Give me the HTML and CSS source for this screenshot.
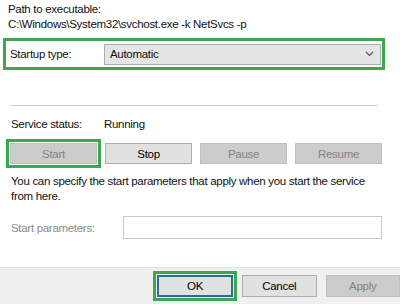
FILE: index.html
```html
<!DOCTYPE html>
<html>
<head>
<meta charset="utf-8">
<link rel="stylesheet" href="styles.css">
</head>
<body>
<div class="dialog">
  <div class="main">
    <div class="label top">Path to executable:</div>
    <div class="label">C:\Windows\System32\svchost.exe -k NetSvcs -p</div>
    <div class="hl startup">
      <span class="field-label">Startup type:</span>
      <div class="select">
        <span>Automatic</span>
        <svg class="chev" width="9" height="6" viewBox="0 0 9 6"><path d="M1 1 L4.5 4.5 L8 1" fill="none" stroke="#555" stroke-width="1.2"/></svg>
      </div>
    </div>
    <div class="sep"></div>
    <div class="status-row">
      <span class="field-label">Service status:</span>
      <span>Running</span>
    </div>
    <div class="btn-row">
      <div class="hl hl-btn"><button class="btn disabled">Start</button></div>
      <button class="btn">Stop</button>
      <button class="btn disabled">Pause</button>
      <button class="btn disabled">Resume</button>
    </div>
    <p class="desc">You can specify the start parameters that apply when you start the service from here.</p>
    <div class="params-row">
      <span class="field-label gray">Start parameters:</span>
      <div class="input"></div>
    </div>
  </div>
  <div class="footer">
    <div class="hl hl-btn"><button class="btn fbtn default">OK</button></div>
    <button class="btn fbtn">Cancel</button>
    <button class="btn fbtn disabled">Apply</button>
  </div>
</div>
</body>
</html>
```

FILE: styles.css
```css
* { box-sizing: border-box; }
html, body { margin: 0; padding: 0; background: #fff; }
body {
  font-family: "Liberation Sans", Arial, sans-serif;
  font-size: 11.5px;
  letter-spacing: -0.3px;
  color: #111;
}
.dialog {
  width: 400px;
  height: 304px;
  overflow: hidden;
  display: flex;
  flex-direction: column;
}
.main {
  height: 267px;
  padding: 2px 0 0 8px;
}
.label { line-height: 14px; }
.label + .label { margin-top: 1px; }
.hl { border: 3px solid #3ea652; }
.startup {
  margin: 7px 0 0 -5px;
  width: 382px;
  height: 32px;
  padding: 0 1px 0 4px;
  display: flex;
  align-items: center;
}
.field-label { width: 94px; flex: none; }
.select {
  flex: 1;
  height: 21px;
  background: #e5e5e5;
  border: 1px solid #adadad;
  display: flex;
  align-items: center;
  justify-content: space-between;
  padding: 0 6px 0 5px;
}
.chev { display: block; }
.sep {
  margin: 35px 0 0 2px;
  width: 368px;
  height: 1px;
  background: #cdcdcd;
}
.status-row {
  margin-top: 11px;
  padding-left: 3px;
  display: flex;
  line-height: 14px;
}
.status-row .field-label { width: 93px; }
.btn-row {
  margin: 8px 0 0 -2px;
  display: flex;
  align-items: center;
  gap: 8px;
}
.hl-btn { padding: 1px; }
.btn-row .hl-btn { margin-right: -4px; }
.btn {
  width: 87px;
  height: 21px;
  font: inherit;
  letter-spacing: inherit;
  background: #e1e1e1;
  border: 1px solid #adadad;
  color: #000;
  padding: 0;
  display: block;
}
.btn.disabled {
  background: #cccccc;
  border-color: #bfbfbf;
  color: #838383;
}
.desc {
  margin: 6px 0 0 3px;
  width: 372px;
  line-height: 15px;
}
.params-row {
  margin-top: 12px;
  padding-left: 3px;
  display: flex;
  align-items: center;
}
.params-row .field-label { width: 112px; }
.gray { color: #8a8a8a; }
.input {
  width: 259px;
  height: 23px;
  border: 1px solid #c9c9c9;
  background: #fff;
}
.footer {
  flex: 1;
  background: #f0f0f0;
  border-top: 1px solid #e2e2e2;
  display: flex;
  align-items: center;
  padding: 0 0 0 153px;
  gap: 9px;
}
.footer .hl-btn { margin-right: -4px; }
.fbtn { width: 76px; height: 22px; }
.fbtn.default { border: 2px solid #2a6e90; }
```
